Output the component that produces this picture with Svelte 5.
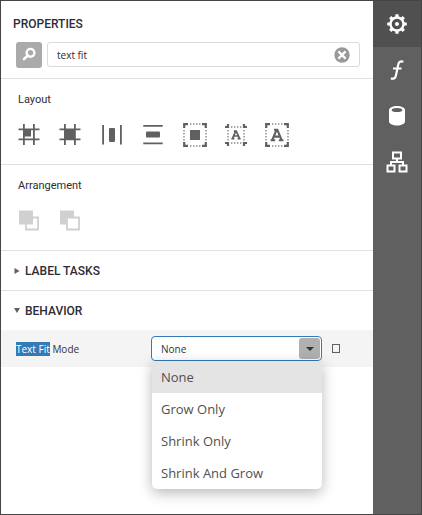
<script>
  let query = $state('text fit');
  let mode = $state('None');
  let labelTasksOpen = $state(false);
  let behaviorOpen = $state(true);
  const modes = ['None', 'Grow Only', 'Shrink Only', 'Shrink And Grow'];
</script>

<div class="designer">
  <main class="panel">
    <header>
      <h1>PROPERTIES</h1>
      <div class="search">
        <button class="search-toggle" aria-label="Search">
          <svg width="26" height="26" viewBox="0 0 26 26" fill="none" stroke="#fff">
            <circle cx="14.5" cy="10.8" r="3.9" stroke-width="2.4" />
            <path d="M12 13.4L8 17" stroke-width="2.6" stroke-linecap="round" />
          </svg>
        </button>
        <div class="search-box">
          <input type="text" aria-label="Search properties" bind:value={query} />
          <button class="clear" aria-label="Clear" onclick={() => (query = '')}>
            <svg width="16" height="16" viewBox="0 0 16 16">
              <circle cx="8" cy="8" r="7.7" fill="#999" />
              <path d="M4.4 4.4l7.2 7.2M11.6 4.4l-7.2 7.2" stroke="#fff" stroke-width="2.2" />
            </svg>
          </button>
        </div>
      </div>
    </header>

    <section class="tools">
      <h2>Layout</h2>
      <div class="icons">
        <button aria-label="Align to grid">
          <svg width="24" height="24" viewBox="0 0 24 24" fill="#606060">
            <path d="M6 1h1.800v21H6zM16 1h1.800v21H16zM1.500 5.500h21v1.800h-21zM1.500 15.500h21v1.800h-21z" />
            <path d="M7 6.500h7v7H7z" />
          </svg>
        </button>
        <button aria-label="Size to grid">
          <svg width="24" height="24" viewBox="0 0 24 24" fill="#606060">
            <path d="M6 1h1.800v21H6zM16 1h1.800v21H16zM1.500 5.500h21v1.800h-21zM1.500 15.500h21v1.800h-21z" />
            <path d="M7 6.500h10v10H7z" />
          </svg>
        </button>
        <button aria-label="Center horizontally">
          <svg width="24" height="24" viewBox="0 0 24 24" fill="#606060">
            <path d="M2.200 2H4v19.500H2.200zM20 2h1.800v19.500H20z" />
            <rect x="9" y="5" width="6" height="14" rx="1" />
          </svg>
        </button>
        <button aria-label="Center vertically">
          <svg width="24" height="24" viewBox="0 0 24 24" fill="#606060">
            <path d="M2.300 2h19.400v1.800H2.300zM2.300 19.500h19.400v1.800H2.300z" />
            <rect x="5" y="8.500" width="14" height="6" rx="1" />
          </svg>
        </button>
        <button aria-label="Fit bounds to container">
          <svg width="24" height="24" viewBox="0 0 24 24" fill="none" stroke="#606060">
            <path d="M1.200 5V1.200H5M19 1.200h3.800V5M22.800 19v3.800H19M5 22.800H1.200V19" stroke-width="2.200" />
            <path d="M7 1h11M7 23h11M1 7v11M23 7v11" stroke="#888" stroke-width="1.400" stroke-dasharray="1.400 1.600" />
            <path d="M7 7h10v10H7z" fill="#606060" stroke="none" />
          </svg>
        </button>
        <button aria-label="Fit text to bounds">
          <svg width="24" height="24" viewBox="0 0 24 24" fill="none" stroke="#606060">
            <path d="M1 4h3V1M20 1v3h3M23 20h-3v3M4 23v-3H1" stroke-width="2.200" />
            <path d="M7 4h11M7 20h11M4 7v11M20 7v11" stroke="#888" stroke-width="1.400" stroke-dasharray="1.400 1.600" />
            <path d="M8.500 15.300L11.800 8.200h.4l3.300 7.100M9.800 13h4.400M7.400 15.600h3M13.600 15.600h3M9.900 8.200h2.200" stroke-width="1.700" />
          </svg>
        </button>
        <button aria-label="Fit bounds to text">
          <svg width="24" height="24" viewBox="0 0 24 24" fill="none" stroke="#606060">
            <path d="M1.200 5V1.200H5M19 1.200h3.800V5M22.800 19v3.800H19M5 22.800H1.200V19" stroke-width="2.200" />
            <path d="M7 1h11M7 23h11M1 7v11M23 7v11" stroke="#888" stroke-width="1.400" stroke-dasharray="1.400 1.600" />
            <path d="M7.300 17L11.500 6.800h.8L16.600 17M9 13.600h6.200M5.600 17.200h4.600M13.800 17.200h4.600M9 6.800h3" stroke-width="2.100" />
          </svg>
        </button>
      </div>
    </section>

    <section class="tools">
      <h2>Arrangement</h2>
      <div class="icons">
        <button aria-label="Bring to front" disabled>
          <svg width="24" height="24" viewBox="0 0 24 24">
            <path d="M9 8.500h12v12H9z" fill="#fff" stroke="#d0d0d0" stroke-width="1.800" />
            <path d="M2 1.500h14v14H2z" fill="#d0d0d0" />
          </svg>
        </button>
        <button aria-label="Send to back" disabled>
          <svg width="24" height="24" viewBox="0 0 24 24">
            <path d="M2 1.500h14v14H2z" fill="#d0d0d0" />
            <path d="M9 8.500h12v12H9z" fill="#fff" stroke="#d0d0d0" stroke-width="1.800" />
          </svg>
        </button>
      </div>
    </section>

    <section class="group">
      <button class="group-title" aria-expanded={labelTasksOpen} onclick={() => (labelTasksOpen = !labelTasksOpen)}>
        <svg width="6" height="8" viewBox="0 0 6 8"><path d="M0.500 1l5 3-5 3z" fill="#606060" /></svg>
        LABEL TASKS
      </button>
    </section>

    <section class="group">
      <button class="group-title" aria-expanded={behaviorOpen} onclick={() => (behaviorOpen = !behaviorOpen)}>
        <svg width="6" height="8" viewBox="0 0 6 8"><path d="M0 1h6L3 6z" fill="#606060" /></svg>
        BEHAVIOR
      </button>
      {#if behaviorOpen}
        <div class="property">
          <label for="fit-mode"><mark>Text Fit</mark> Mode</label>
          <div class="editor">
            <select id="fit-mode" bind:value={mode}>
              {#each modes as item}
                <option>{item}</option>
              {/each}
            </select>
            <span class="arrow">
              <svg width="8" height="4" viewBox="0 0 8 4"><path d="M0 0h8L4 4z" fill="#333" /></svg>
            </span>
            <ul class="menu">
              {#each modes as item}
                <li><button class:selected={item === mode} onclick={() => (mode = item)}>{item}</button></li>
              {/each}
            </ul>
          </div>
          <button class="marker" aria-label="Property options"></button>
        </div>
      {/if}
    </section>
  </main>

  <nav class="tabs">
    <button class="active" aria-label="Properties">
      <svg width="24" height="24" viewBox="-12 -12 24 24" fill="none" stroke="#fff">
        <circle r="6.500" stroke-width="2.400" />
        <circle r="2" fill="#fff" stroke="none" />
        <path d="M0-7v-2.800M0 7v2.800M-7 0h-2.800M7 0h2.800M-5-5l-1.800-1.800M5 5l1.800 1.800M-5 5l-1.800 1.800M5-5l1.800-1.800" stroke-width="3.200" />
      </svg>
    </button>
    <button aria-label="Expressions">
      <svg width="24" height="24" viewBox="0 0 24 24" fill="none" stroke="#fff" stroke-width="2.200">
        <path d="M18.400 3.700c-3-.8-4.600.1-5.200 3L11 17.300c-.6 2.900-1.900 3.900-5.200 3.200M8 10.500h8.500" />
      </svg>
    </button>
    <button aria-label="Fields">
      <svg width="24" height="24" viewBox="0 0 24 24">
        <path d="M4 6c0-2.200 3.600-4 8-4s8 1.800 8 4v11.500c0 2.200-3.600 4-8 4s-8-1.800-8-4z" fill="#fff" />
        <ellipse cx="12" cy="6" rx="5.300" ry="2" fill="#606060" />
      </svg>
    </button>
    <button aria-label="Report explorer">
      <svg width="24" height="24" viewBox="0 0 24 24" fill="none" stroke="#fff" stroke-width="2">
        <path d="M8 2.500h8v6H8zM2.500 15.500h7v6h-7zM14.500 15.500h7v6h-7zM12 8.500V12M6 15.500V12h12v3.500" />
      </svg>
    </button>
  </nav>
</div>

<style>
  :global(body) {
    background: #fff;
  }

  .designer {
    display: flex;
    box-sizing: border-box;
    min-height: 100vh;
    border: 1px solid #454545;
    font: 11px/16px Roboto, sans-serif;
    color: #2c2c36;
  }

  button {
    display: block;
    margin: 0;
    padding: 0;
    border: 0;
    background: none;
    font: inherit;
    color: inherit;
  }

  svg {
    display: block;
    flex: none;
  }

  .panel {
    flex: 1;
    min-width: 0;
  }

  header {
    padding: 15px 13px 10px 12px;
    border-bottom: 1px solid #e0e0e0;
  }

  h1,
  h2 {
    margin: 0;
    font-size: 11px;
    line-height: 16px;
  }

  h1 {
    font-size: 12px;
    font-weight: 500;
  }

  h2 {
    font-weight: 400;
  }

  .search {
    display: flex;
    gap: 5px;
    margin: 10px 0 0 3px;
  }

  .search-toggle {
    border-radius: 3px;
    background: #aaa;
  }

  .search-box {
    display: flex;
    flex: 1;
    align-items: center;
    box-sizing: border-box;
    height: 25px;
    padding: 0 9px;
    border: 1px solid #dadada;
    border-radius: 3px;
  }

  .search-box input {
    flex: 1;
    min-width: 0;
    padding: 0;
    border: 0;
    outline: 0;
    background: none;
    font: 10px/16px "Open Sans", sans-serif;
    color: #2c2c36;
  }

  .tools {
    padding: 13px 25px 17px 17px;
    border-bottom: 1px solid #e0e0e0;
  }

  .icons {
    display: grid;
    grid-template-columns: repeat(8, 1fr);
    margin: 15px 0 0 -1px;
  }

  .group + .group {
    border-top: 1px solid #e0e0e0;
  }

  .group-title {
    display: flex;
    align-items: center;
    gap: 5px;
    width: 100%;
    height: 39px;
    padding: 0 13px;
    font-size: 12px;
    font-weight: 500;
  }

  .property {
    display: flex;
    align-items: center;
    box-sizing: border-box;
    height: 37px;
    padding: 0 33px 0 15px;
    background: #f4f4f4;
    font: 10px/16px "Open Sans", sans-serif;
    color: #333;
  }

  label {
    flex: 135;
  }

  mark {
    background: #337ab7;
    color: #fff;
  }

  .editor {
    position: relative;
    flex: 171;
  }

  select {
    display: block;
    appearance: none;
    box-sizing: border-box;
    width: 100%;
    height: 25px;
    padding: 0 24px 0 9px;
    border: 1px solid #337ab7;
    border-radius: 4px;
    background: #fff;
    font: inherit;
    color: #333;
  }

  .arrow {
    position: absolute;
    top: 2px;
    right: 2px;
    display: flex;
    align-items: center;
    justify-content: center;
    width: 21px;
    height: 21px;
    border-radius: 3px;
    background: #b0b0b0;
    pointer-events: none;
  }

  .menu {
    position: absolute;
    top: 100%;
    left: 1px;
    right: 0;
    margin: 0;
    padding: 0;
    overflow: hidden;
    list-style: none;
    border-radius: 0 0 5px 5px;
    background: #fff;
    box-shadow: 0 4px 14px rgba(0, 0, 0, 0.28);
    font: 13px/20px "Open Sans", sans-serif;
    color: #505050;
  }

  .menu button {
    width: 100%;
    padding: 6px 9px;
    text-align: left;
  }

  .menu .selected {
    background: #e4e4e4;
  }

  .marker {
    box-sizing: border-box;
    width: 8px;
    height: 9px;
    margin-left: 10px;
    border: 1px solid #606060;
  }

  .tabs {
    width: 48px;
    background: #606060;
  }

  .tabs button {
    display: flex;
    align-items: center;
    justify-content: center;
    width: 100%;
    height: 46px;
  }

  .tabs .active {
    background: #505050;
  }
</style>
